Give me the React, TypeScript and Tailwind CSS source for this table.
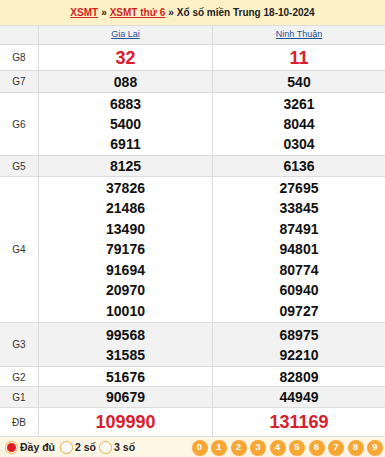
const rows: { label: string; h: string; gray?: boolean; a: string[]; b: string[]; big?: boolean; lh?: string }[] = [
  { label: "G8", h: "h-[26px]", a: ["32"], b: ["11"], big: true },
  { label: "G7", h: "h-[22px]", gray: true, a: ["088"], b: ["540"] },
  { label: "G6", h: "h-[63px]", a: ["6883", "5400", "6911"], b: ["3261", "8044", "0304"] },
  { label: "G5", h: "h-[21px]", gray: true, a: ["8125"], b: ["6136"] },
  {
    label: "G4",
    h: "h-[146px]",
    lh: "leading-[20.5px]",
    a: ["37826", "21486", "13490", "79176", "91694", "20970", "10010"],
    b: ["27695", "33845", "87491", "94801", "80774", "60940", "09727"],
  },
  { label: "G3", h: "h-[44px]", gray: true, a: ["99568", "31585"], b: ["68975", "92210"] },
  { label: "G2", h: "h-[20px]", a: ["51676"], b: ["82809"] },
  { label: "G1", h: "h-[21px]", gray: true, a: ["90679"], b: ["44949"] },
  { label: "ĐB", h: "h-[29px]", a: ["109990"], b: ["131169"], big: true },
];

function Cell({ nums, big, lh }: { nums: string[]; big?: boolean; lh?: string }) {
  return (
    <div className="flex flex-col items-center justify-center border-r border-[#dcdcdc] last:border-r-0">
      {nums.map((n) => (
        <span
          key={n}
          className={
            big
              ? "text-[18px] leading-[22px] font-bold text-[#d9202a]"
              : `text-[14px] font-bold text-[#111] ${lh ?? "leading-[20px]"}`
          }
        >
          {n}
        </span>
      ))}
    </div>
  );
}

export default function App() {
  return (
    <div className="w-[385px] h-[457px] overflow-hidden bg-white font-['Liberation_Sans',Arial,sans-serif]">
      {/* Breadcrumb */}
      <div className="h-[25px] bg-[#fdf1c7] flex items-center justify-center text-[10px] font-bold text-[#222]">
        <a className="text-[#d21f1f] underline">XSMT</a>
        <span className="mx-[3px]">»</span>
        <a className="text-[#d21f1f] underline">XSMT thứ 6</a>
        <span className="mx-[3px]">»</span>
        <span>Xổ số miền Trung 18-10-2024</span>
      </div>

      {/* Table */}
      <div className="border-t border-[#dcdcdc]">
        <div className="grid grid-cols-[39px_174px_1fr] h-[19px] bg-[#f2f2f2] border-b border-[#dcdcdc] text-[9px] text-[#1f4e9c]">
          <div className="border-r border-[#dcdcdc]" />
          <div className="flex items-center justify-center border-r border-[#dcdcdc]">
            <a className="underline">Gia Lai</a>
          </div>
          <div className="flex items-center justify-center">
            <a className="underline">Ninh Thuận</a>
          </div>
        </div>
        {rows.map((r) => (
          <div
            key={r.label}
            className={`grid grid-cols-[39px_174px_1fr] ${r.h} border-b border-[#dcdcdc] ${r.gray ? "bg-[#f2f2f2]" : "bg-white"}`}
          >
            <div className="flex items-center justify-center border-r border-[#dcdcdc] text-[10px] text-[#333]">
              {r.label}
            </div>
            <Cell nums={r.a} big={r.big} lh={r.lh} />
            <Cell nums={r.b} big={r.big} lh={r.lh} />
          </div>
        ))}
      </div>

      {/* Footer controls */}
      <div className="h-[21px] bg-[#fff6e6] flex items-center pl-[5px] pr-[2px] text-[10.5px] font-bold text-[#222]">
        <label className="flex items-center gap-[2px]">
          <span className="w-[13px] h-[13px] rounded-full border border-[#f0a93a] bg-white flex items-center justify-center">
            <span className="w-[9px] h-[9px] rounded-full bg-[#e21b23]" />
          </span>
          Đầy đủ
        </label>
        <label className="flex items-center gap-[2px] ml-[5px]">
          <span className="w-[13px] h-[13px] rounded-full border border-[#f0a93a] bg-white" />
          2 số
        </label>
        <label className="flex items-center gap-[2px] ml-[3px]">
          <span className="w-[13px] h-[13px] rounded-full border border-[#f0a93a] bg-white" />
          3 số
        </label>
        <div className="ml-auto flex gap-[3.5px]">
          {["0", "1", "2", "3", "4", "5", "6", "7", "8", "9"].map((d) => (
            <span
              key={d}
              className="w-[16px] h-[16px] rounded-full bg-[#f8a634] text-white text-[9.5px] font-bold flex items-center justify-center"
            >
              {d}
            </span>
          ))}
        </div>
      </div>
    </div>
  );
}
